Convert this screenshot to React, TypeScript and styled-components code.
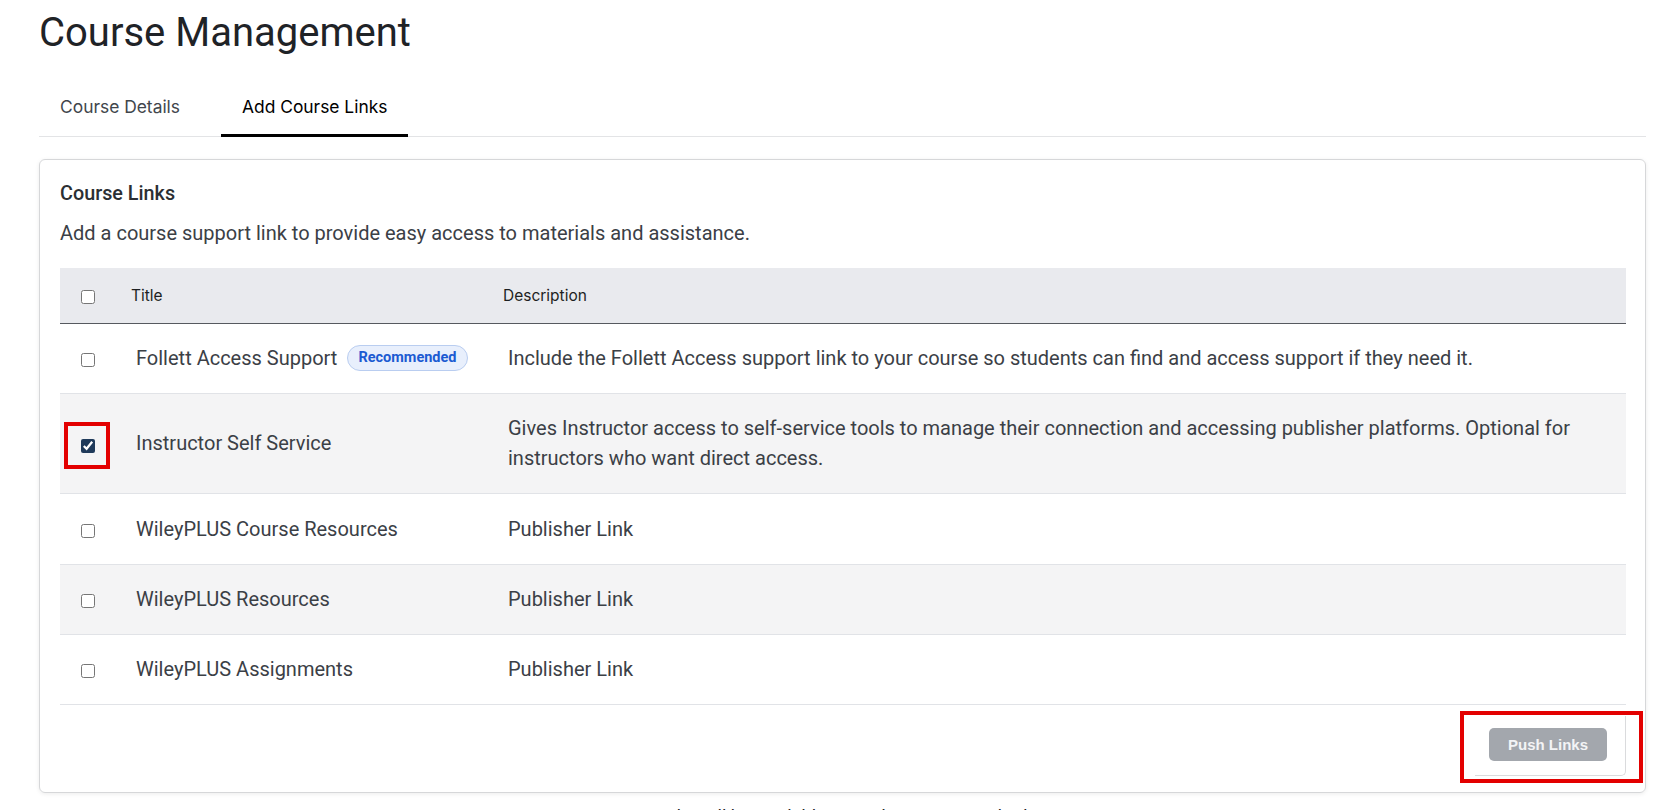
import styled, { createGlobalStyle } from 'styled-components';

const GlobalStyle = createGlobalStyle`
  body {
    margin: 0;
    background: #ffffff;
    font-family: Roboto, "Liberation Sans", sans-serif;
    color: #212529;
  }
`;

const Page = styled.div`
  padding: 9px 10px 0 39px;
`;

const PageTitle = styled.h1`
  margin: 0;
  font-family: Roboto, sans-serif;
  font-size: 40px;
  font-weight: 400;
  line-height: 48px;
  color: #1f2327;
`;

const TabList = styled.div`
  display: flex;
  gap: 20px;
  margin-top: 22px;
  border-bottom: 1px solid #e3e4e6;
`;

const Tab = styled.button<{ $active?: boolean }>`
  margin: 0 0 -1px;
  padding: 16px 21px 15px;
  background: none;
  border: none;
  border-bottom: 3px solid ${({ $active }) => ($active ? '#000000' : 'transparent')};
  font-family: Inter, sans-serif;
  font-size: 17.4px;
  line-height: 24px;
  color: ${({ $active }) => ($active ? '#000000' : '#41464c')};
  cursor: pointer;
`;

const Card = styled.section`
  margin-top: 22px;
  padding: 21px 19px 16px 20px;
  border: 1px solid #d6d7d9;
  border-radius: 6px;
  box-shadow: 0 1px 4px rgba(0, 0, 0, 0.08);
`;

const CardTitle = styled.h2`
  margin: 0;
  font-size: 19.8px;
  font-weight: 500;
  line-height: 26px;
  color: #2b2f33;
`;

const CardText = styled.p`
  margin: 13px 0 0;
  font-size: 20px;
  line-height: 27px;
  color: #3b4046;
`;

const Table = styled.table`
  width: 100%;
  margin-top: 21px;
  border-collapse: collapse;
  table-layout: fixed;
`;

const HeadCell = styled.th<{ $check?: boolean }>`
  height: 55px;
  padding: 0 ${({ $check }) => ($check ? '0' : '15px')};
  background: #e9eaee;
  border-bottom: 1px solid #56595f;
  font-family: Inter, sans-serif;
  font-size: 15.5px;
  font-weight: 400;
  text-align: ${({ $check }) => ($check ? 'center' : 'left')};
  color: #1d1f22;
`;

const Row = styled.tr<{ $shaded?: boolean }>`
  background: ${({ $shaded }) => ($shaded ? '#f4f4f5' : '#ffffff')};
`;

const Cell = styled.td<{ $check?: boolean }>`
  padding: ${({ $check }) => ($check ? '0' : '19.2px 20px 20px')};
  border-bottom: 1px solid #e1e3e7;
  font-size: 20px;
  line-height: 30px;
  color: #3b4046;
  text-align: ${({ $check }) => ($check ? 'center' : 'left')};
  vertical-align: middle;
`;

const TitleWrap = styled.div`
  display: flex;
  align-items: center;
  gap: 10px;
`;

const Badge = styled.span`
  display: inline-flex;
  align-items: center;
  height: 24px;
  padding: 0 10px;
  border: 1px solid #b9cdf0;
  border-radius: 13px;
  background: #e8effc;
  font-size: 14.5px;
  font-weight: 700;
  line-height: 24px;
  color: #1c5bd2;
`;

const CheckWrap = styled.span<{ $marked?: boolean }>`
  position: relative;
  display: inline-flex;
  vertical-align: middle;

  &::after {
    content: '';
    display: ${({ $marked }) => ($marked ? 'block' : 'none')};
    position: absolute;
    inset: -17px -15px -16px -17px;
    border: 4px solid #e30000;
    pointer-events: none;
  }
`;

const Check = styled.input.attrs({ type: 'checkbox' })`
  width: 14px;
  height: 14px;
  margin: 0;
  accent-color: #1f3a5a;
`;

const Footer = styled.div`
  display: flex;
  justify-content: flex-end;
  margin-top: 11px;
`;

const ButtonWrap = styled.div`
  position: relative;
  padding: 12px 18px 14px 14px;
  border-right: 1px solid #dadbdd;
  border-bottom: 1px solid #dadbdd;
  border-bottom-right-radius: 5px;
`;

const RedMark = styled.span`
  position: absolute;
  inset: -5px -18px -8px -15px;
  border: 4.5px solid #e30000;
  pointer-events: none;
`;

const PushButton = styled.button`
  width: 118px;
  height: 33px;
  border: none;
  border-radius: 5px;
  background: #a3a7ad;
  font-family: "Liberation Sans", Arial, sans-serif;
  font-size: 15px;
  font-weight: 700;
  color: #f3f4f6;
`;

const Note = styled.p`
  margin: 10px 0 0;
  font-size: 18px;
  line-height: 27px;
  text-align: center;
  color: #1f2327;
`;

const links = [
  {
    title: 'Follett Access Support',
    recommended: true,
    checked: false,
    description:
      'Include the Follett Access support link to your course so students can find and access support if they need it.',
  },
  {
    title: 'Instructor Self Service',
    checked: true,
    description:
      'Gives Instructor access to self-service tools to manage their connection and accessing publisher platforms. Optional for instructors who want direct access.',
  },
  { title: 'WileyPLUS Course Resources', description: 'Publisher Link' },
  { title: 'WileyPLUS Resources', description: 'Publisher Link' },
  { title: 'WileyPLUS Assignments', description: 'Publisher Link' },
];

export default function App() {
  return (
    <>
      <GlobalStyle />
      <Page>
        <PageTitle>Course Management</PageTitle>

        <TabList>
          <Tab>Course Details</Tab>
          <Tab $active>Add Course Links</Tab>
        </TabList>

        <Card>
          <CardTitle>Course Links</CardTitle>
          <CardText>Add a course support link to provide easy access to materials and assistance.</CardText>

          <Table>
            <colgroup>
              <col style={{ width: 56 }} />
              <col style={{ width: 372 }} />
              <col />
            </colgroup>
            <thead>
              <tr>
                <HeadCell $check>
                  <CheckWrap>
                    <Check />
                  </CheckWrap>
                </HeadCell>
                <HeadCell>Title</HeadCell>
                <HeadCell>Description</HeadCell>
              </tr>
            </thead>
            <tbody>
              {links.map((link, idx) => (
                <Row key={link.title} $shaded={idx % 2 === 1}>
                  <Cell $check>
                    <CheckWrap $marked={link.checked}>
                      <Check defaultChecked={link.checked} />
                    </CheckWrap>
                  </Cell>
                  <Cell>
                    <TitleWrap>
                      {link.title}
                      {link.recommended && <Badge>Recommended</Badge>}
                    </TitleWrap>
                  </Cell>
                  <Cell>{link.description}</Cell>
                </Row>
              ))}
            </tbody>
          </Table>

          <Footer>
            <ButtonWrap>
              <RedMark />
              <PushButton disabled>Push Links</PushButton>
            </ButtonWrap>
          </Footer>
        </Card>

        <Note>Links will be available to students once pushed.</Note>
      </Page>
    </>
  );
}
